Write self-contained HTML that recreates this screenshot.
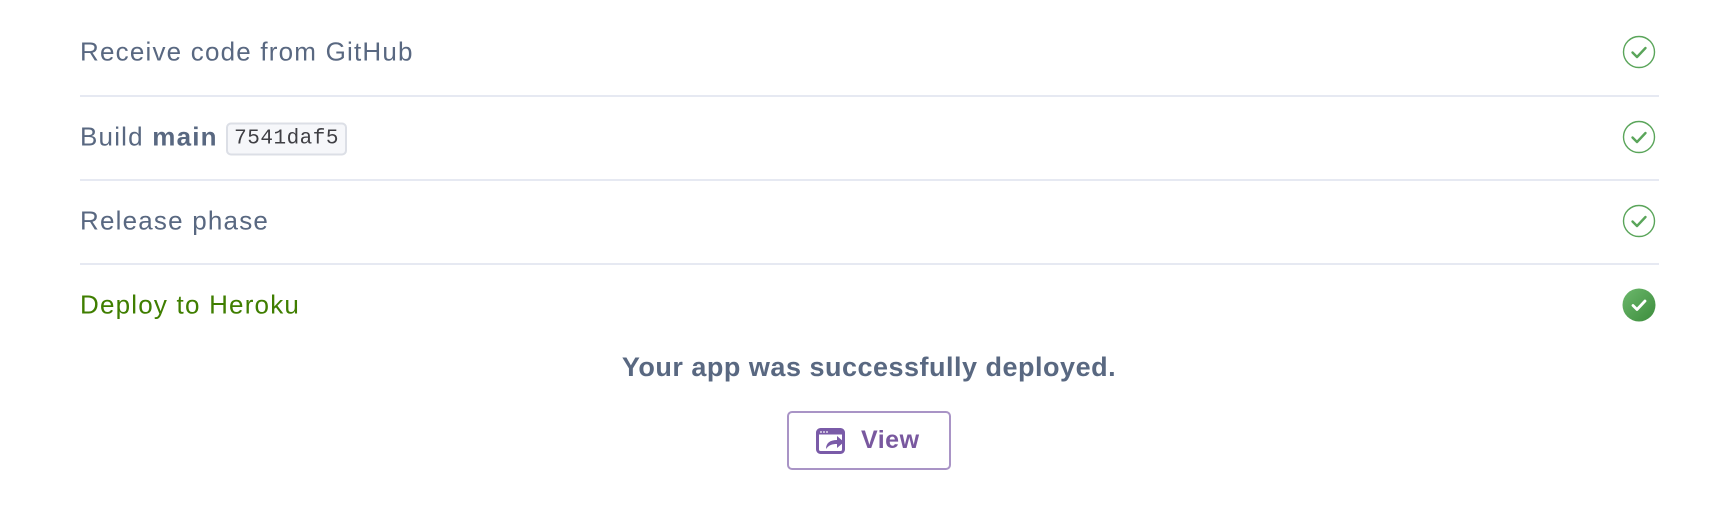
<!DOCTYPE html>
<html><head><style>
body{margin:0;background:#fff;width:1710px;height:528px;overflow:hidden;font-family:"Liberation Sans",sans-serif;}
.row{position:absolute;left:80px;width:1579px;height:84px;}
.row span.t{position:absolute;left:0;top:50%;transform:translateY(-50%);font-size:26px;letter-spacing:1.2px;color:#596881;white-space:nowrap;}
.div{position:absolute;left:80px;width:1579px;height:2px;background:#e6e9f2;}
.chk{position:absolute;left:1542px;top:50%;transform:translateY(-50%);}
code{font-family:"Liberation Mono",monospace;font-size:21px;letter-spacing:0.5px;color:#3f3f44;background:#f6f7fa;border:2px solid #dcdfe6;border-radius:5px;padding:3px 6px;vertical-align:2px;}
</style></head><body>
<div class="row" style="top:10px"><span class="t">Receive code from GitHub</span>
<svg class="chk" width="34" height="34" viewBox="0 0 34 34"><circle cx="17" cy="17" r="15.5" fill="none" stroke="#5aa55a" stroke-width="1.4"/><path d="M10.5 17.5l4.5 4.5 8.5-9" fill="none" stroke="#5aa55a" stroke-width="2.4" stroke-linecap="round" stroke-linejoin="round"/></svg></div>
<div class="div" style="top:95px"></div>
<div class="row" style="top:95px"><span class="t">Build <b>main</b> <code>7541daf5</code></span>
<svg class="chk" width="34" height="34" viewBox="0 0 34 34"><circle cx="17" cy="17" r="15.5" fill="none" stroke="#5aa55a" stroke-width="1.4"/><path d="M10.5 17.5l4.5 4.5 8.5-9" fill="none" stroke="#5aa55a" stroke-width="2.4" stroke-linecap="round" stroke-linejoin="round"/></svg></div>
<div class="div" style="top:179px"></div>
<div class="row" style="top:179px"><span class="t">Release phase</span>
<svg class="chk" width="34" height="34" viewBox="0 0 34 34"><circle cx="17" cy="17" r="15.5" fill="none" stroke="#5aa55a" stroke-width="1.4"/><path d="M10.5 17.5l4.5 4.5 8.5-9" fill="none" stroke="#5aa55a" stroke-width="2.4" stroke-linecap="round" stroke-linejoin="round"/></svg></div>
<div class="div" style="top:263px"></div>
<div class="row" style="top:263px"><span class="t" style="color:#3f7e00">Deploy to Heroku</span>
<svg class="chk" width="34" height="34" viewBox="0 0 34 34"><defs><linearGradient id="g" x1="0" y1="0" x2="1" y2="1"><stop offset="0" stop-color="#6cb86c"/><stop offset="1" stop-color="#3c8c3c"/></linearGradient></defs><circle cx="17" cy="17" r="16.5" fill="url(#g)"/><path d="M11 17.5l4 4 8-8.5" fill="none" stroke="#fff" stroke-width="2.8" stroke-linecap="round" stroke-linejoin="round"/></svg></div>
<div style="position:absolute;left:0;width:1738px;top:352px;text-align:center;font-size:27px;letter-spacing:0.5px;font-weight:bold;color:#596881">Your app was successfully deployed.</div>
<div style="position:absolute;left:787px;top:411px;width:160px;height:55px;border:2px solid #a994c6;border-radius:5px;box-sizing:content-box;">
<svg style="position:absolute;left:27px;top:15px" width="30" height="26" viewBox="0 0 30 26"><rect x="1.5" y="1.5" width="26" height="23" rx="3" fill="none" stroke="#7a5ba8" stroke-width="3"/><rect x="1.5" y="1.5" width="26" height="5" fill="#7a5ba8"/><circle cx="5" cy="4" r="0.9" fill="#fff"/><circle cx="8" cy="4" r="0.9" fill="#fff"/><circle cx="11" cy="4" r="0.9" fill="#fff"/><path d="M10 21c0-6 4-9 11-9v-4l7 6-7 6v-4c-5 0-8 1-11 5z" fill="#7a5ba8"/></svg>
<span style="position:absolute;left:72px;top:13px;font-size:25px;letter-spacing:0.5px;font-weight:bold;color:#79589f">View</span></div>
</body></html>
